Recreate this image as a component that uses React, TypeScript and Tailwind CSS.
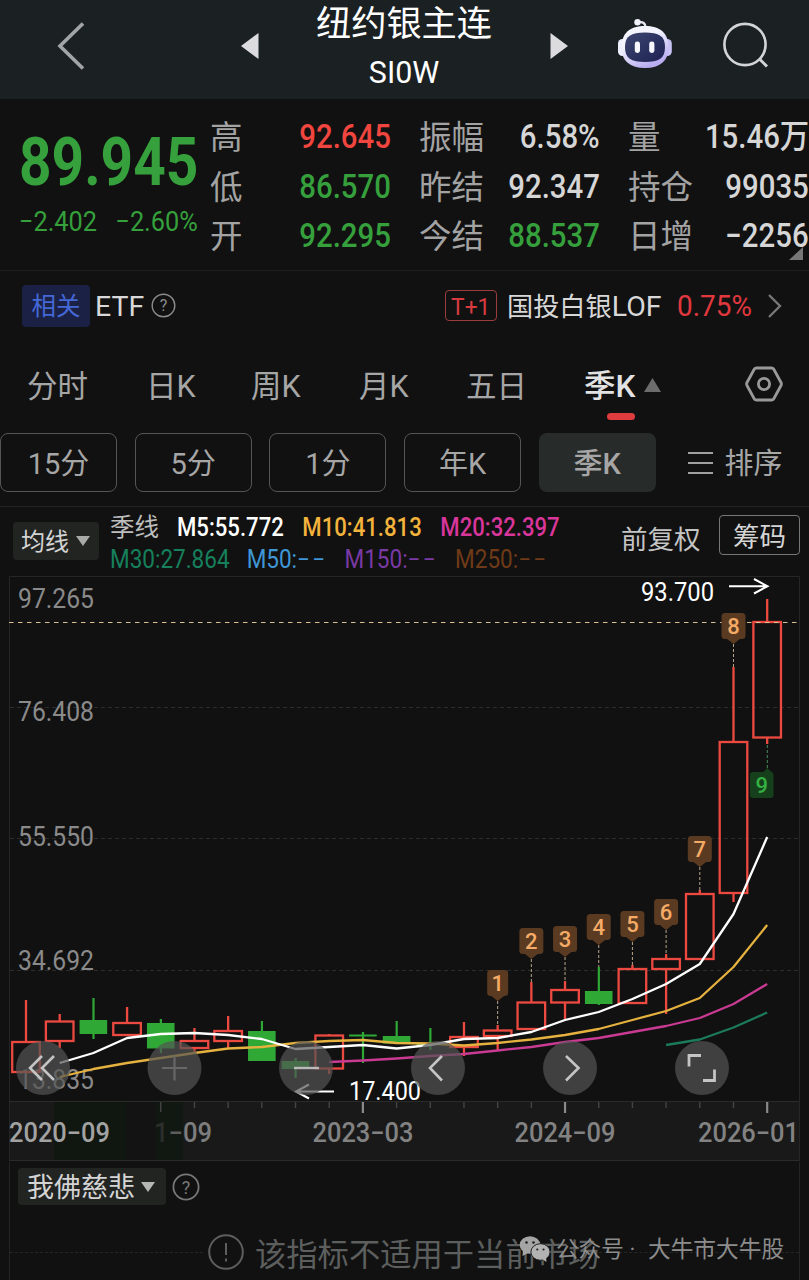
import * as React from "react";
import { clsx } from "clsx";

const QUOTE_COLUMNS = [
  [
    { label: "高", value: "92.645", color: "text-[#f0463f]" },
    { label: "低", value: "86.570", color: "text-[#35a03c]" },
    { label: "开", value: "92.295", color: "text-[#35a03c]" },
  ],
  [
    { label: "振幅", value: "6.58%", color: "text-[#d6d6d6]" },
    { label: "昨结", value: "92.347", color: "text-[#d6d6d6]" },
    { label: "今结", value: "88.537", color: "text-[#35a03c]" },
  ],
  [
    { label: "量", value: "15.46万", color: "text-[#d6d6d6]" },
    { label: "持仓", value: "99035", color: "text-[#d6d6d6]" },
    { label: "日增", value: "−2256", color: "text-[#d6d6d6]" },
  ],
];

const PERIODS = ["15分", "5分", "1分", "年K", "季K"];

const AVERAGES = [
  [
    { text: "M5:55.772", color: "text-white" },
    { text: "M10:41.813", color: "text-[#f3b33c]" },
    { text: "M20:32.397", color: "text-[#d9369b]" },
  ],
  [
    { text: "M30:27.864", color: "text-[#16805c]" },
    { text: "M50:", dashes: true, color: "text-[#3f97d6]" },
    { text: "M150:", dashes: true, color: "text-[#7a3aa6]" },
    { text: "M250:", dashes: true, color: "text-[#6f3a17]" },
  ],
];

interface Candle {
  high: number;
  low: number;
  top: number;
  bottom: number;
  up: boolean;
}

// [high, low, body top, body bottom, up]
const CANDLES: Candle[] = (
  [
    [1000, 1072, 1042, 1072, 1],
    [1014, 1048, 1021.5, 1041, 1],
    [998, 1039, 1020, 1034, 0],
    [1007, 1036, 1023, 1035, 1],
    [1019, 1053, 1023, 1048.5, 0],
    [1028, 1053, 1041, 1048, 1],
    [1016, 1049, 1031, 1041, 1],
    [1021, 1061, 1031, 1061, 0],
    [1058, 1078, 1061, 1069, 0],
    [1034, 1074, 1035.5, 1068.5, 1],
    [1032, 1063, 1034.5, 1036.5, 0],
    [1021, 1044, 1036, 1043.5, 0],
    [1028, 1050, 1043, 1045, 0],
    [1022, 1056, 1037, 1047, 1],
    [1025, 1050, 1030.5, 1036, 1],
    [982, 1030, 1002.5, 1029, 1],
    [981, 1019, 990, 1002.5, 1],
    [967, 1005, 991, 1004, 0],
    [965, 1003, 969, 1003, 1],
    [954, 1014, 959, 969, 1],
    [890, 959, 894, 959, 1],
    [667, 902, 742, 893, 1],
    [599, 744, 622, 737.5, 1],
  ] as number[][]
).map(([high, low, top, bottom, up]) => ({ high, low, top, bottom, up: up === 1 }));

const candleX = (i: number) => 26 + i * 33.69;

const MA_LINES = [
  {
    color: "#c93a93",
    start: 9,
    ys: [1062, 1060.5, 1058.5, 1056, 1054, 1050.5, 1047, 1042, 1038, 1032, 1026, 1018, 1004, 984],
  },
  { color: "#1b7a5c", start: 19, ys: [1045, 1039.5, 1027.5, 1012.5] },
  {
    color: "#e5b13f",
    start: 1,
    ys: [
      1077, 1069, 1063, 1058, 1053, 1048.5, 1047, 1043, 1041, 1040, 1043, 1043.5, 1045.5, 1043, 1039.5, 1035, 1029,
      1020, 1011, 998, 967, 925,
    ],
  },
  {
    color: "#ffffff",
    start: 1,
    ys: [
      1063, 1053, 1038, 1034, 1033, 1035, 1039, 1049, 1047, 1045, 1048.5, 1045, 1039, 1038, 1032, 1020, 1012, 999, 984,
      964, 914, 837,
    ],
  },
];

const MARKERS = [
  { n: 1, i: 14, top: 970 },
  { n: 2, i: 15, top: 928 },
  { n: 3, i: 16, top: 926 },
  { n: 4, i: 17, top: 914 },
  { n: 5, i: 18, top: 911 },
  { n: 6, i: 19, top: 899 },
  { n: 7, i: 20, top: 836 },
  { n: 8, i: 21, top: 613 },
];

const PRICE_LABELS = [
  { text: "97.265", y: 608 },
  { text: "76.408", y: 721 },
  { text: "55.550", y: 845.5 },
  { text: "34.692", y: 970 },
  { text: "13.835", y: 1088.5 },
];

const DATE_LABELS = [
  { text: "2020−09", x: 9, fill: "#a2a2a2" },
  { text: "2023−03", x: 312.5, fill: "#828282" },
  { text: "2024−09", x: 514.5, fill: "#828282" },
  { text: "2026−01", x: 698, fill: "#828282" },
];

const TOOL_BUTTONS = [
  { x: 43, d: "M42 1056L30 1068L42 1080M54 1056L42 1068L54 1080", stroke: "#c4c4c4", width: 2.6 },
  { x: 174.5, d: "M162 1068H187M174.5 1055.5V1080.5", stroke: "#666866", width: 2.2 },
  { x: 306, d: "M294 1068H319", stroke: "#b9b9b9", width: 2.4 },
  { x: 438, d: "M442 1056L430 1068L442 1080.5", stroke: "#c4c4c4", width: 2.6 },
  { x: 570, d: "M566 1056L578.5 1068L566 1080.5", stroke: "#c4c4c4", width: 2.6 },
  { x: 702, d: "M689 1066.5V1055.5H701M703 1080.5H714.5V1069.5", stroke: "#c4c4c4", width: 2.8 },
];

function RobotIcon() {
  return (
    <svg width="56" height="52" viewBox="617 18 56 52">
      <defs>
        <linearGradient id="shell" x1="0" y1="0" x2="0.5" y2="1">
          <stop offset="0.4" stopColor="#f4f5ff" />
          <stop offset="1" stopColor="#b9adf0" />
        </linearGradient>
        <linearGradient id="visor" x1="0" y1="0" x2="1" y2="1">
          <stop offset="0" stopColor="#3d4670" />
          <stop offset="1" stopColor="#1d2152" />
        </linearGradient>
      </defs>
      <path d="M638 22.5C643 21.5 645.5 23 645.5 28" fill="none" stroke="#e9e9f5" strokeWidth="2.2" />
      <circle cx="637.5" cy="22.3" r="3.2" fill="#f2f2fa" />
      <rect x="618" y="39" width="9" height="17" rx="4.5" fill="#eef0ff" />
      <rect x="662.8" y="39" width="9" height="17" rx="4.5" fill="#c9c2f5" />
      <path
        d="M645 26C660 26 668.5 33 668.5 47.5C668.5 61 660 68 645 68C630 68 621.5 61 621.5 47.5C621.5 33 630 26 645 26Z"
        fill="url(#shell)"
      />
      <path
        d="M645 32.5C659 32.5 665 36 665 47C665 58.5 659 62 645 62C631 62 625 58.5 625 47C625 36 631 32.5 645 32.5Z"
        fill="url(#visor)"
      />
      <rect x="634.8" y="41.5" width="5.2" height="11.5" rx="2.4" fill="#f7f8ff" />
      <rect x="649.2" y="41.5" width="5.2" height="11.5" rx="2.4" fill="#f7f8ff" />
    </svg>
  );
}

function Header() {
  return (
    <header className="flex h-[99px] bg-[#1b2123]">
      <svg className="mt-5 ml-14 shrink-0" width="30" height="52" viewBox="56 20 30 52">
        <path d="M83 23.5L60 46L83 68.5" fill="none" stroke="#a2a4a5" strokeWidth="3.6" />
      </svg>
      <svg className="mt-8 ml-[154px] shrink-0" width="20" height="28" viewBox="240 32 20 28">
        <path d="M241 46L258.5 33V59Z" fill="#dcdcde" />
      </svg>
      <div className="ml-[44px] flex w-[200px] shrink-0 flex-col items-center whitespace-nowrap text-white">
        <div className="mt-[6px] text-[35.2px] leading-[36px]">纽约银主连</div>
        <div className="mt-[13px] scale-x-[0.95] text-[32px] leading-[34px]">SI0W</div>
      </div>
      <svg className="mt-8 ml-[44px] shrink-0" width="22" height="28" viewBox="548 32 22 28">
        <path d="M550.5 33L568 46L550.5 59Z" fill="#dcdcde" />
      </svg>
      <div className="mt-[18px] ml-[47px] shrink-0">
        <RobotIcon />
      </div>
      <svg className="mt-5 ml-[47px] shrink-0" width="50" height="50" viewBox="720 20 50 50">
        <circle cx="745" cy="44.5" r="20.6" fill="none" stroke="#d2d4d5" strokeWidth="2.6" />
        <path d="M759.5 59L767 66.5" stroke="#d2d4d5" strokeWidth="3" />
      </svg>
    </header>
  );
}

function QuotePanel() {
  return (
    <section className="relative flex h-[172px] border-b border-[#1f1f1f]">
      <div className="w-[210px] shrink-0 pl-[19px] text-[#35a03c]">
        <div className="mt-[30px] w-max origin-left scale-x-[0.86] text-[66px] leading-[68px] font-bold">89.945</div>
        <div className="mt-[9px] flex w-max origin-left scale-x-[0.92] gap-[20px] text-[27.5px] leading-[32px]">
          <span>−2.402</span>
          <span>−2.60%</span>
        </div>
      </div>
      <div className="flex shrink-0 gap-[29px] pt-[13px]">
        {QUOTE_COLUMNS.map((column, i) => (
          <div key={i} className="w-[180px]">
            {column.map((item) => (
              <div key={item.label} className="flex h-[49.5px] items-center justify-between whitespace-nowrap">
                <span className="pt-1 text-[32.5px] text-[#a3a3a3]">{item.label}</span>
                <span className={clsx("mr-[-1px] origin-right scale-x-[0.89] text-[33px] font-medium", item.color)}>
                  {item.value}
                </span>
              </div>
            ))}
          </div>
        ))}
      </div>
      <svg className="absolute top-[148px] left-[789px]" width="14" height="13" viewBox="0 0 14 13">
        <path d="M14 0V13H0Z" fill="#777" />
      </svg>
    </section>
  );
}

function RelatedRow() {
  return (
    <section className="flex h-[73px] items-center pb-1 whitespace-nowrap">
      <span className="ml-[22px] flex h-[42px] w-[68px] items-center justify-center rounded bg-[#1b2145] pt-[3px] text-[24.5px] text-[#4468d6]">
        相关
      </span>
      <span className="ml-[5px] w-[56px] pt-1 text-[28.5px] text-[#d8d8d8]">ETF</span>
      <svg width="26" height="26" viewBox="0 0 26 26">
        <circle cx="12.5" cy="12.5" r="11.3" fill="none" stroke="#8b8b8b" strokeWidth="1.4" />
        <text x="12.5" y="18.3" textAnchor="middle" fontSize="16" fill="#8b8b8b">?</text>
      </svg>
      <span className="ml-[268px] flex h-[31px] w-[52px] items-center justify-center rounded border border-[#9c3c3c] text-[24px] text-[#d63c3f]">
        <span className="scale-x-[0.95] pt-[2px]">T+1</span>
      </span>
      <span className="ml-[10px] w-[170px] pt-1 text-[26.2px] text-[#d8d8d8]">
        国投白银<span className="text-[28.5px]">LOF</span>
      </span>
      <span className="w-[86px] origin-left scale-x-[0.93] text-[30px] text-[#e0383e]">0.75%</span>
      <svg className="ml-1" width="16" height="26" viewBox="0 0 16 26">
        <path d="M2 2L13 13L2 24" fill="none" stroke="#777" strokeWidth="2.4" />
      </svg>
    </section>
  );
}

function ChartTabs() {
  return (
    <nav className="flex h-[89px] text-[30.5px] whitespace-nowrap text-[#a6a6a6]">
      <span className="ml-[27px] w-[119px] pt-[20px]">分时</span>
      <span className="w-[105px] pt-[20px]">日K</span>
      <span className="w-[108px] pt-[20px]">周K</span>
      <span className="w-[107px] pt-[20px]">月K</span>
      <span className="w-[118px] pt-[20px]">五日</span>
      <div className="flex w-[161px] flex-col">
        <div className="flex items-center gap-[7px] pt-[20px]">
          <span className="w-[53px] text-[31.5px] leading-[46px] font-medium text-[#e2e2e2]">季K</span>
          <svg className="-mt-1" width="17" height="14" viewBox="0 0 17 14">
            <path d="M8.5 0L17 14H0Z" fill="#6c6c6c" />
          </svg>
        </div>
        <span className="mt-[3px] ml-[23px] h-[7px] w-7 rounded-full bg-[#df3c3f]" />
      </div>
      <svg className="mt-[22px]" width="38" height="36" viewBox="0 0 38 36">
        <path
          d="M11.5 2H26.5Q28 2 28.8 3.3L36 16.5Q36.8 18 36 19.5L28.8 32.7Q28 34 26.5 34H11.5Q10 34 9.2 32.7L2 19.5Q1.2 18 2 16.5L9.2 3.3Q10 2 11.5 2Z"
          fill="none"
          stroke="#999"
          strokeWidth="2.8"
        />
        <circle cx="19" cy="18" r="5.6" fill="none" stroke="#999" strokeWidth="2.8" />
      </svg>
    </nav>
  );
}

function PeriodRow() {
  return (
    <div className="flex h-[74px] items-start border-b border-[#242424] text-[29px] whitespace-nowrap text-[#a6a6a6]">
      {PERIODS.map((period) => (
        <div
          key={period}
          className={clsx(
            "mr-[17.7px] flex h-[59px] w-[117px] shrink-0 items-center justify-center rounded-lg pt-1",
            period === "季K" ? "bg-[#272b29] font-medium" : "border border-[#555]"
          )}
        >
          {period}
        </div>
      ))}
      <div className="ml-[15px] flex h-[59px] items-center gap-[11px]">
        <svg width="25" height="24" viewBox="0 0 25 24">
          <path d="M0 2H25M0 12H25M0 22H25" stroke="#a0a0a0" strokeWidth="2" />
        </svg>
        <span className="pt-1">排序</span>
      </div>
    </div>
  );
}

function AverageLegend() {
  return (
    <div className="flex h-[69px] whitespace-nowrap">
      <div className="mt-[15px] ml-[13px] flex h-[38px] w-[86px] shrink-0 items-center gap-[7px] rounded bg-[#222422] pl-2 text-[24px] text-[#d4d4d4]">
        <span className="pt-[2px]">均线</span>
        <svg width="14" height="10" viewBox="0 0 14 10">
          <path d="M0 0H14L7 10Z" fill="#a8aaa8" />
        </svg>
      </div>
      <div className="ml-[11px] w-[511px] shrink-0 pt-[5px] text-[25px] leading-[31.5px]">
        <div className="flex">
          <span className="w-[67px] text-[24.5px] text-[#bdbdbd]">季线</span>
          <div className="flex w-max origin-left scale-x-[0.885] gap-[21px]">
            {AVERAGES[0].map((ma) => (
              <span key={ma.text} className={clsx("font-medium", ma.color)}>{ma.text}</span>
            ))}
          </div>
        </div>
        <div className="flex w-max origin-left scale-x-[0.9] gap-[19px]">
          {AVERAGES[1].map((ma) => (
            <span key={ma.text} className={ma.color}>
              {ma.text}
              {"dashes" in ma && <span className="tracking-[2.6px]">−−</span>}
            </span>
          ))}
        </div>
      </div>
      <span className="mt-[13px] w-[98px] shrink-0 text-[26.5px] text-[#c4c4c4]">前复权</span>
      <span className="mt-[8px] flex h-[40px] w-[81px] shrink-0 items-center justify-center rounded border border-[#777] pt-[3px] text-[26.5px] text-[#d4d4d4]">
        筹码
      </span>
    </div>
  );
}

function CandleChart() {
  return (
    <svg className="block" width="809" height="586" viewBox="0 576 809 586">
      <rect x="9" y="1101" width="790" height="60" fill="#191919" />
      <rect x="54" y="1102" width="72" height="58" fill="#101610" />
      <rect x="126" y="1102" width="30" height="58" fill="#121312" />
      <rect x="156" y="1102" width="27" height="58" fill="#111711" />

      <path d="M9.5 1161V576.5H799.5V1161" fill="none" stroke="#262626" />
      <path d="M9 1101.5H799M9 1160.5H799" stroke="#2b2b2b" />
      <path d="M10 707.5H799M10 838.5H799M10 970.5H799" stroke="#2c2c2c" strokeDasharray="4 3" />

      {CANDLES.map((_, i) => {
        if (i < 4) return null;
        const major = [10, 16, 22].includes(i);
        return (
          <path
            key={i}
            d={`M${candleX(i)} 1102V${major ? 1113 : i === 4 ? 1112 : 1108}`}
            stroke={major ? "#8a8a8a" : "#444"}
            strokeWidth={major ? 2.2 : 1.4}
          />
        );
      })}

      {PRICE_LABELS.map((label) => (
        <text key={label.text} x="18" y={label.y} textLength="76" lengthAdjust="spacingAndGlyphs" fontSize="27" fill="#8a8a8a">
          {label.text}
        </text>
      ))}

      {CANDLES.map((c, i) => {
        const x = candleX(i);
        return c.up ? (
          <g key={i} stroke="#ec4a40" strokeWidth="2.3" fill="none">
            <path d={`M${x} ${c.high}V${c.top}M${x} ${c.bottom}V${c.low}`} />
            <rect x={x - 13.8} y={c.top} width="27.6" height={c.bottom - c.top} />
          </g>
        ) : (
          <g key={i} fill="#2fa836">
            <rect x={x - 1} y={c.high} width="2.2" height={c.low - c.high} />
            <rect x={x - 13.8} y={c.top} width="27.6" height={c.bottom - c.top} />
          </g>
        );
      })}

      <path d="M9 622.5H799" stroke="#d9c193" strokeWidth="1.2" strokeDasharray="4.5 4.5" />

      {MA_LINES.map((line) => (
        <polyline
          key={line.color}
          points={line.ys.map((y, i) => `${candleX(line.start + i)},${y}`).join(" ")}
          fill="none"
          stroke={line.color}
          strokeWidth="2.3"
          strokeLinejoin="round"
        />
      ))}

      {/* Nine-turn sequence markers */}
      {MARKERS.map(({ n, i, top }) => {
        const x = candleX(i);
        const half = n === 1 ? 10.5 : 12;
        return (
          <g key={n}>
            <path d={`M${x} ${top + 31}V${CANDLES[i].high}`} stroke="#b8a68c" strokeWidth="1" strokeDasharray="3 2" />
            <rect x={x - half} y={top} width={half * 2} height="26" rx="3.5" fill="#5a3b22" />
            <path d={`M${x - 7} ${top + 25.5}H${x + 7}L${x} ${top + 31}Z`} fill="#5a3b22" />
            <text x={x} y={top + 21} textAnchor="middle" fontSize="22" fontWeight="500" fill="#f5ab66">
              {n}
            </text>
          </g>
        );
      })}
      <path d="M767.3 745V768" stroke="#4c8a5c" strokeDasharray="3 2" />
      <path d="M763 772.5L767.3 768L772 772.5Z" fill="#15401b" />
      <rect x="750" y="772" width="23.5" height="26" rx="3" fill="#15401b" />
      <text x="761.8" y="792.5" textAnchor="middle" fontSize="22" fontWeight="500" fill="#35b043">9</text>

      {/* High / low callouts */}
      <g fill="none" stroke="#fff" strokeWidth="2">
        <path d="M729 586.3H767M754 579L767.5 586.3L754 593.5" />
        <path d="M334 1091.5H296M309 1084.5L296 1091.5L309 1098.5" />
      </g>
      <text x="641" y="600.5" textLength="73" lengthAdjust="spacingAndGlyphs" fontSize="25" fill="#fff">93.700</text>
      <text x="349" y="1100" textLength="72" lengthAdjust="spacingAndGlyphs" fontSize="25" fill="#fff">17.400</text>

      {TOOL_BUTTONS.map((button) => (
        <g key={button.x}>
          <circle cx={button.x} cy="1068" r="27" fill="#525452" fillOpacity="0.7" />
          <path d={button.d} fill="none" stroke={button.stroke} strokeWidth={button.width} />
        </g>
      ))}

      {DATE_LABELS.map((label) => (
        <text
          key={label.text}
          x={label.x}
          y="1141.5"
          textLength="101"
          lengthAdjust="spacingAndGlyphs"
          fontSize="27"
          fontWeight="500"
          fill={label.fill}
        >
          {label.text}
        </text>
      ))}
      <text x="154" y="1141.5" textLength="58" lengthAdjust="spacingAndGlyphs" fontSize="27" fontWeight="500" fill="#7d7d7d">
        <tspan fill="#2c2e2c">1</tspan>
        <tspan fill="#5c5c5c">−</tspan>09
      </text>
    </svg>
  );
}

function IndicatorPanel() {
  return (
    <section className="mr-[9px] ml-[9px] h-[118px] overflow-hidden border-x border-[#242424] whitespace-nowrap">
      <div className="flex h-[58px] items-start pt-[6px] pl-2">
        <div className="flex h-[37px] w-[148px] items-center gap-[6px] rounded bg-[#222422] pl-[9px] text-[27px] text-[#d4d4d4]">
          <span className="pt-1">我佛慈悲</span>
          <svg width="14" height="10" viewBox="0 0 14 10">
            <path d="M0 0H14L7 10Z" fill="#b5b7b5" />
          </svg>
        </div>
        <svg className="mt-[5px] ml-[6px]" width="28" height="28" viewBox="0 0 28 28">
          <circle cx="14" cy="14" r="12.6" fill="none" stroke="#777" strokeWidth="1.8" />
          <text x="14" y="20.5" textAnchor="middle" fontSize="18" fill="#777">?</text>
        </svg>
      </div>
      <div className="-mt-px flex items-center">
        <div className="w-[193px] border-t border-dashed border-[#252525]" />
        <svg className="mx-[3.5px] shrink-0" width="38" height="66" viewBox="0 0 38 66">
          <circle cx="19" cy="33" r="16.8" fill="none" stroke="#5e5e5e" strokeWidth="2" />
          <path d="M19 24V36M19 39.5V42.5" stroke="#5e5e5e" strokeWidth="2" />
        </svg>
        <span className="ml-[7px] pt-2 text-[31.3px] text-[#5c5f5e]">该指标不适用于当前市场</span>
        <div className="flex-1 border-t border-dashed border-[#252525]" />
      </div>
    </section>
  );
}

function Watermark() {
  return (
    <div className="absolute top-[1231px] left-[519px] flex h-9 items-center whitespace-nowrap">
      <svg width="32" height="28" viewBox="0 0 32 28">
        <ellipse cx="11" cy="10" rx="10.3" ry="8.8" fill="#a5a5a5" />
        <path d="M4 15L3.5 21L9 18Z" fill="#a5a5a5" />
        <circle cx="7.5" cy="7.5" r="1.3" fill="#222" />
        <circle cx="14.5" cy="7.5" r="1.3" fill="#222" />
        <ellipse cx="21.5" cy="17" rx="9.6" ry="8.3" fill="#b2b2b2" stroke="#222" strokeWidth="1" />
        <path d="M23 24L27.5 27L27 22Z" fill="#b2b2b2" />
        <circle cx="18.3" cy="14.5" r="1.1" fill="#222" />
        <circle cx="24.5" cy="14.5" r="1.1" fill="#222" />
      </svg>
      <span className="ml-[5px] w-[92px] pt-[2px] text-[22.6px] text-[#8c8c8c]">公众号 ·</span>
      <span className="pt-[2px] text-[22.7px] text-[#8c8c8c]">大牛市大牛股</span>
    </div>
  );
}

export default function App() {
  return (
    <div className="relative h-[1280px] w-[809px] overflow-hidden bg-[#111111] font-[Roboto,'Noto_Sans_CJK_SC',sans-serif]">
      <Header />
      <QuotePanel />
      <RelatedRow />
      <ChartTabs />
      <PeriodRow />
      <AverageLegend />
      <CandleChart />
      <IndicatorPanel />
      <Watermark />
    </div>
  );
}
